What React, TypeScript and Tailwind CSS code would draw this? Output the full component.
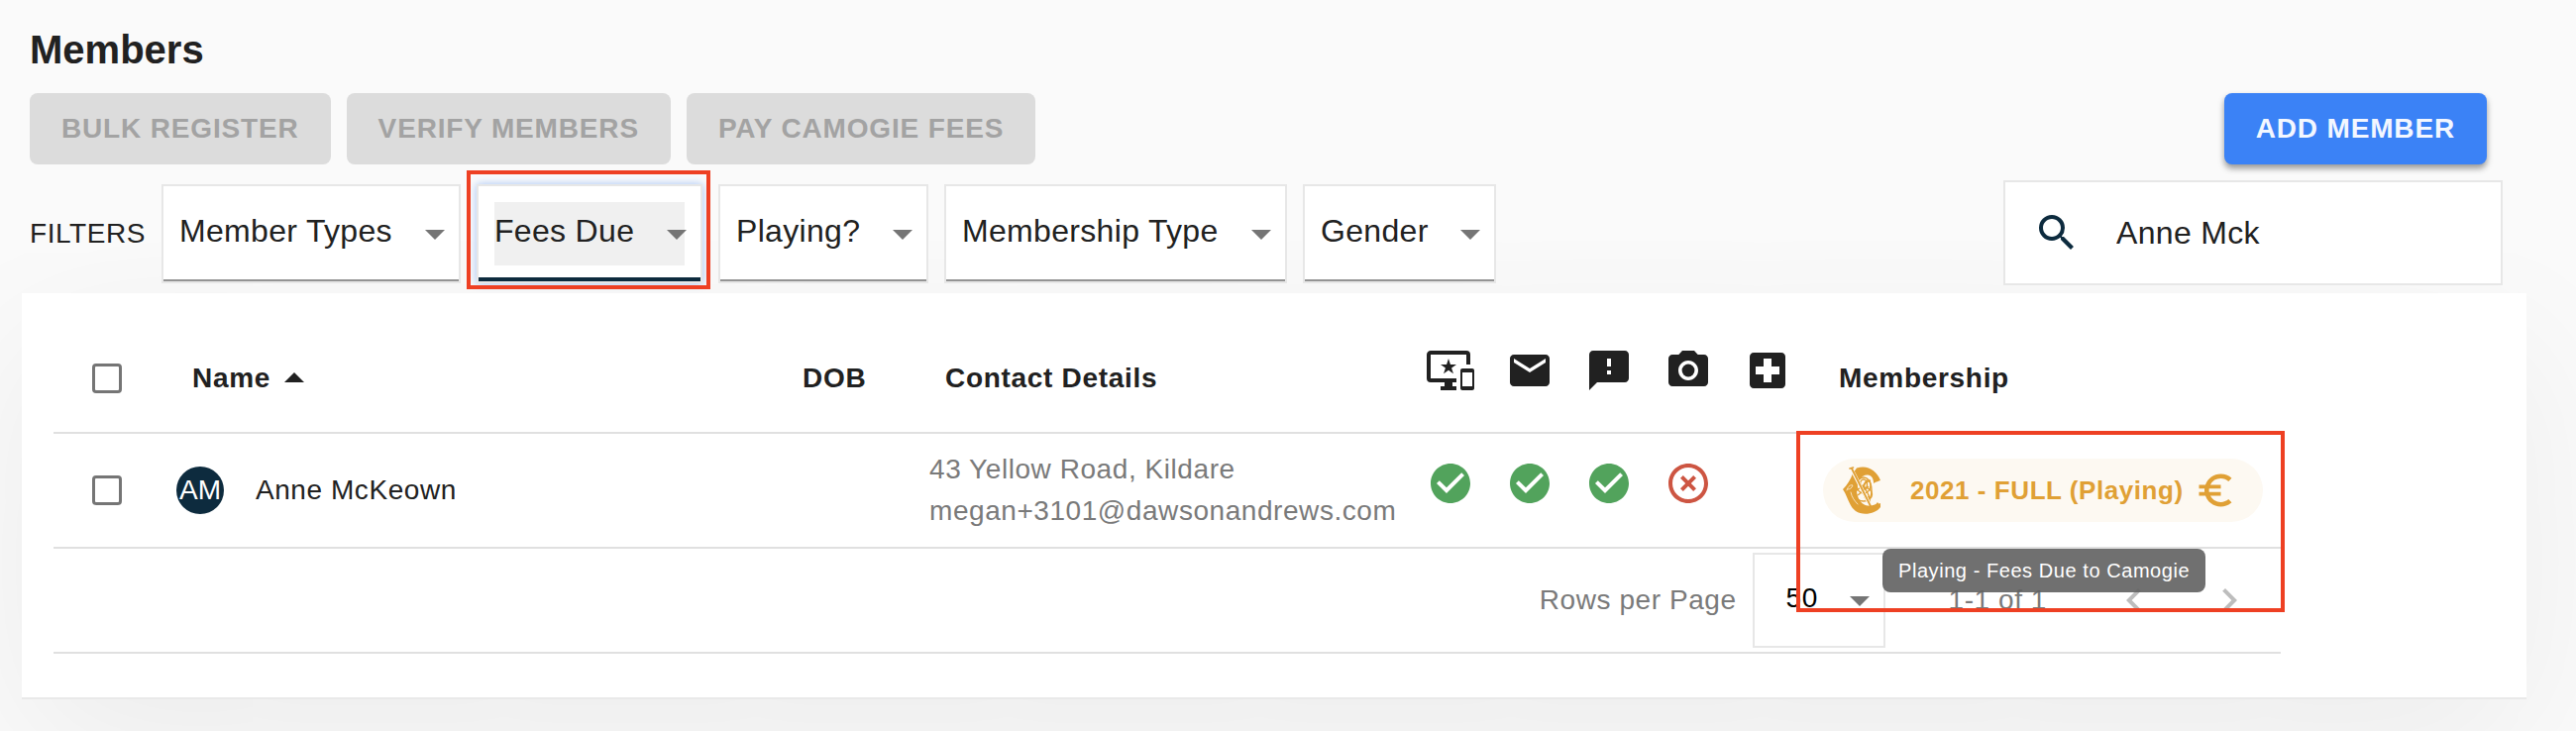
import { useState } from "react";
import type { ReactNode } from "react";
import {
  MdCameraAlt,
  MdCheckCircle,
  MdChevronLeft,
  MdChevronRight,
  MdEmail,
  MdEuroSymbol,
  MdFeedback,
  MdHighlightOff,
  MdImportantDevices,
  MdLocalHospital,
  MdSearch,
} from "react-icons/md";

const filters = ["Member Types", "Fees Due", "Playing?", "Membership Type", "Gender"];

const bulkActions = ["Bulk Register", "Verify Members", "Pay Camogie Fees"];

const statusColumns = [
  { label: "App user", Icon: MdImportantDevices, ok: true },
  { label: "Email", Icon: MdEmail, ok: true },
  { label: "Notices", Icon: MdFeedback, ok: true },
  { label: "Photo", Icon: MdCameraAlt, ok: false },
  { label: "Medical", Icon: MdLocalHospital, ok: null },
];

function Arrow({ className }: { className: string }) {
  return (
    <svg viewBox="0 0 24 24" className={className} fill="currentColor" aria-hidden="true">
      <path d="M7 10l5 5 5-5z" />
    </svg>
  );
}

function FilterSelect({ name, active }: { name: string; active: boolean }) {
  return (
    <div
      className={`relative border-2 border-[#e7e7e7] bg-white px-4 pt-4 ${
        active ? "shadow-[0_0_8px_rgba(59,130,246,0.45)]" : ""
      }`}
    >
      <select
        aria-label={name}
        className={`block h-16 appearance-none pb-1.5 pr-[50px] text-[32px] leading-10 tracking-[0.01em] outline-none ${
          active ? "bg-[#f0f0f0]" : "bg-white"
        }`}
      >
        <option>{name}</option>
      </select>
      <Arrow className="pointer-events-none absolute right-0 top-6 size-12 text-[#757575]" />
      <div className="-mx-4 flex h-4 items-end">
        <div className={`w-full ${active ? "h-1 bg-[#0d2b3e]" : "h-0.5 bg-[#949494]"}`} />
      </div>
      {active && (
        <div className="pointer-events-none absolute -bottom-2 -left-3 -right-2.5 -top-4 border-4 border-[#ee4023]" />
      )}
    </div>
  );
}

function Checkbox({ label }: { label: string }) {
  return (
    <input
      type="checkbox"
      aria-label={label}
      className="mx-auto block size-[30px] appearance-none rounded-sm border-3 border-[#757575] checked:bg-[#0d2b3e]"
    />
  );
}

function HeadCell({ children }: { children?: ReactNode }) {
  return <th className="px-8 text-left font-bold">{children}</th>;
}

function CamogieLogo() {
  return (
    <svg viewBox="0 0 38 48" className="h-12 w-[38px] shrink-0" aria-hidden="true">
      <path
        fill="#e0a035"
        d="M38 14 C34 4 25 -2 14 1.5 L10 7 C8 13 4 19 0 23 C5 30 6 40 13 45 C20 50 33 48 38 41 L38 37 C34 39 31 38 28 40 C20 40 15 34 14 25 C14 15 19 8 25 8.500 C29 9 31 12 31 17 C34 15 36 15 38 14 Z"
      />
      <g fill="none" stroke="#e0a035" strokeWidth="1.4">
        <ellipse cx="21" cy="19" rx="7" ry="8" />
        <ellipse cx="21" cy="18" rx="3.500" ry="5" />
        <ellipse cx="21" cy="28" rx="8.500" ry="7" />
        <ellipse cx="25" cy="24" rx="4" ry="10" />
        <path d="M14 15 C21 20 28 27 27 37 M28 14 C18 17 15 29 28 32 M15 29 L26 20" />
      </g>
      <g fill="none" strokeLinecap="round">
        <path d="M9 3 L28 40" stroke="#fdf9f2" strokeWidth="3.500" />
        <path d="M9 2 L28 40" stroke="#e0a035" strokeWidth="1.800" />
        <path d="M7 2 L10.500 1" stroke="#e0a035" strokeWidth="1.600" />
        <path d="M4 24 C5 20 8 18 10 19 C9 22 7 23 5 23 M8 26 C9 31 12 35 15 38" stroke="#fdf9f2" strokeWidth="0.700" />
      </g>
      <path d="M22 40 C27 39 32 41 35 36 L38 40 C34 45 28 45 22 43 Z" fill="#e0a035" />
    </svg>
  );
}

export default function App() {
  const [search, setSearch] = useState("Anne Mck");

  return (
    <div className="min-h-screen overflow-hidden bg-[#fafafa] pb-8 pl-[22px] pr-[50px] pt-[26px] font-['Liberation_Sans',Arial,sans-serif] text-[#212121]">
      <h1 className="pl-2 text-[40px] font-bold leading-12">Members</h1>

      <div className="relative z-10 mt-5 flex justify-between pl-2 pr-10">
        <div className="flex gap-4">
          {bulkActions.map((action) => (
            <button
              key={action}
              disabled
              className="h-[72px] rounded-lg bg-[#dcdcdc] px-8 text-[28px] font-bold uppercase tracking-[0.03em] text-[#a3a3a3]"
            >
              {action}
            </button>
          ))}
        </div>
        <button className="h-[72px] rounded-lg bg-[#3b82f6] px-8 text-[28px] font-bold uppercase tracking-[0.03em] text-[#f3f7ff] shadow-[0_4px_6px_rgba(0,0,0,0.4)]">
          Add Member
        </button>
      </div>

      <div className="relative z-10 mt-4 flex items-start justify-between pl-2 pr-6">
        <div className="flex items-center gap-4 pt-1">
          <span className="text-[28px] tracking-[0.02em]">FILTERS</span>
          <div className="flex gap-4">
            {filters.map((name) => (
              <FilterSelect key={name} name={name} active={name === "Fees Due"} />
            ))}
          </div>
        </div>
        <label className="flex h-[106px] w-[504px] items-center gap-9 border-2 border-[#e7e7e7] bg-white px-7">
          <MdSearch className="size-12 shrink-0 text-[#0d2b3e]" />
          <input
            aria-label="Search members"
            value={search}
            onChange={(e) => setSearch(e.target.value)}
            className="min-w-0 flex-1 text-[32px] tracking-[0.01em] outline-none"
          />
        </label>
      </div>

      <div className="relative mt-2 border-b-2 border-[#e9e9e9] bg-white pb-11 pl-8 pr-[248px] pt-8 shadow-[0_48px_160px_rgba(0,0,0,0.06)]">
        <table className="w-full table-fixed border-separate border-spacing-0 text-[28px] tracking-[0.02em] [&_td]:border-b-2 [&_td]:border-[#e0e0e0] [&_th]:border-b-2 [&_th]:border-[#e0e0e0]">
          <colgroup>
            <col className="w-[108px]" />
            <col />
            <col className="w-36" />
            <col className="w-[502px]" />
            {statusColumns.map(({ label }) => (
              <col key={label} className="w-20" />
            ))}
            <col className="w-[478px]" />
          </colgroup>
          <thead className="tracking-wide">
            <tr className="h-[110px]">
              <th>
                <Checkbox label="Select all members" />
              </th>
              <HeadCell>
                <button className="flex items-center font-bold tracking-wide">
                  Name
                  <Arrow className="size-12 rotate-180" />
                </button>
              </HeadCell>
              <HeadCell>DOB</HeadCell>
              <HeadCell>Contact Details</HeadCell>
              {statusColumns.map(({ label, Icon }) => (
                <th key={label} aria-label={label} className="px-4 pb-4">
                  <Icon className="size-12" />
                </th>
              ))}
              <HeadCell>Membership</HeadCell>
            </tr>
          </thead>
          <tbody>
            <tr className="h-[116px]">
              <td>
                <Checkbox label="Select Anne McKeown" />
              </td>
              <td className="px-4">
                <div className="flex items-center gap-8">
                  <span className="flex size-12 items-center justify-center rounded-full bg-[#0d2b3e] tracking-normal text-white">
                    AM
                  </span>
                  Anne McKeown
                </div>
              </td>
              <td />
              <td className="px-4 leading-[42px] text-[#7a7a7a]">
                43 Yellow Road, Kildare
                <br />
                megan+3101@dawsonandrews.com
              </td>
              {statusColumns.map(({ label, ok }) => (
                <td key={label} className="px-4 pb-3.5">
                  {ok === true && <MdCheckCircle className="size-12 text-[#52a35c]" />}
                  {ok === false && <MdHighlightOff className="size-12 text-[#cd5542]" />}
                </td>
              ))}
              <td className="relative px-4">
                <div className="relative flex h-16 w-[444px] items-center rounded-full bg-[#fdf9f2] pl-5 text-[26px] font-bold text-[#e0a035]">
                  <CamogieLogo />
                  <span className="ml-[30px] whitespace-nowrap">2021 - FULL (Playing)</span>
                  <MdEuroSymbol className="ml-2.5 size-11 shrink-0" />
                  <div
                    role="tooltip"
                    className="absolute left-[60px] top-[91px] z-10 whitespace-nowrap rounded-lg bg-[#616161]/90 px-4 text-xl font-normal leading-11 text-white"
                  >
                    Playing - Fees Due to Camogie
                  </div>
                </div>
                <div className="pointer-events-none absolute -bottom-[66px] -right-1 -top-[3px] left-[-11px] z-20 border-4 border-[#ee4023]" />
              </td>
            </tr>
          </tbody>
          <tfoot>
            <tr className="h-[106px]">
              <td colSpan={10}>
                <div className="flex items-center justify-end pr-7 text-[#7a7a7a]">
                  <label htmlFor="rows-per-page">Rows per Page</label>
                  <div className="relative ml-4 border-2 border-[#e7e7e7]">
                    <select
                      id="rows-per-page"
                      className="block h-[92px] w-[130px] appearance-none pb-1 pl-8 text-black outline-none"
                    >
                      <option>50</option>
                    </select>
                    <Arrow className="pointer-events-none absolute right-0 top-[22px] size-12 text-[#757575]" />
                  </div>
                  <span className="ml-16">1-1 of 1</span>
                  <button aria-label="Previous page" disabled className="ml-16 text-[#bdbdbd]">
                    <MdChevronLeft className="size-12" />
                  </button>
                  <button aria-label="Next page" disabled className="ml-12 text-[#bdbdbd]">
                    <MdChevronRight className="size-12" />
                  </button>
                </div>
              </td>
            </tr>
          </tfoot>
        </table>
      </div>
    </div>
  );
}
